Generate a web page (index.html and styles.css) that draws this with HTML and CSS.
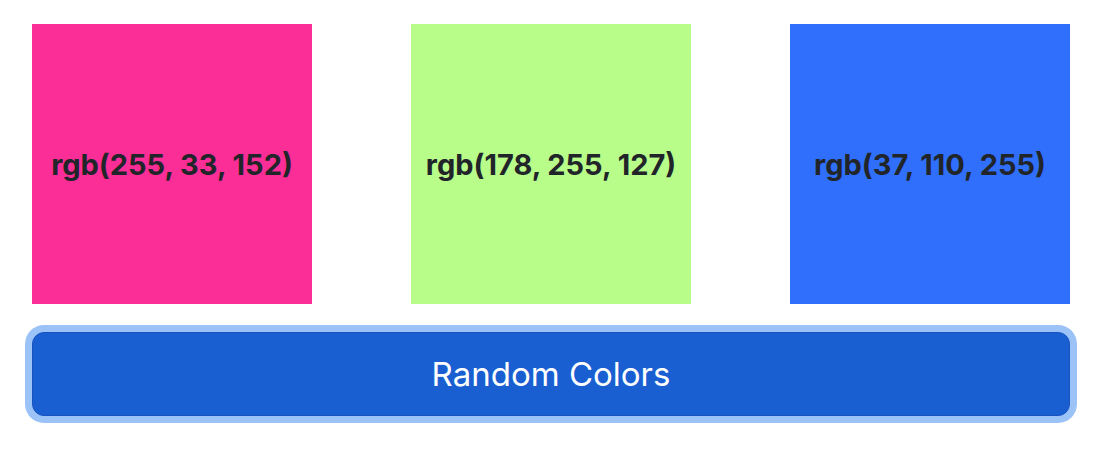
FILE: index.html
```html
<!DOCTYPE html>
<html lang="en">
<head>
    <meta charset="UTF-8">
    <meta name="viewport" content="width=device-width, initial-scale=1.0">
    <title>Random Colors</title>
    <link rel="stylesheet" href="styles.css">
</head>
<body>
    <div class="container">
        <div class="swatches">
            <div class="swatch swatch-pink">rgb(255, 33, 152)</div>
            <div class="swatch swatch-green">rgb(178, 255, 127)</div>
            <div class="swatch swatch-blue">rgb(37, 110, 255)</div>
        </div>
        <button type="button" class="btn-random">Random Colors</button>
    </div>
</body>
</html>
```

FILE: styles.css
```css
body {
    font-family: Inter, "Liberation Sans", Arial, sans-serif;
    margin: 0;
    background: #fff;
    color: #212529;
}
.container {
    width: 1038px;
    padding: 24px 32px;
    display: flex;
    flex-direction: column;
    gap: 28px;
}
.swatches {
    display: flex;
    justify-content: space-between;
}
.swatch {
    width: 280px;
    height: 280px;
    display: flex;
    align-items: center;
    justify-content: center;
    font-size: 29px;
    font-weight: 700;
    color: #212529;
}
.swatch-pink {
    background-color: #fb2d96;
}
.swatch-green {
    background-color: #b8fd8a;
}
.swatch-blue {
    background-color: #2f6ffb;
}
.btn-random {
    height: 84px;
    width: 100%;
    border: 1px solid #1853c2;
    border-radius: 12px;
    background-color: #1a5fd2;
    color: #fff;
    font-family: inherit;
    font-size: 33px;
    box-shadow: 0 0 0 7px #9cc3f8;
}
```
